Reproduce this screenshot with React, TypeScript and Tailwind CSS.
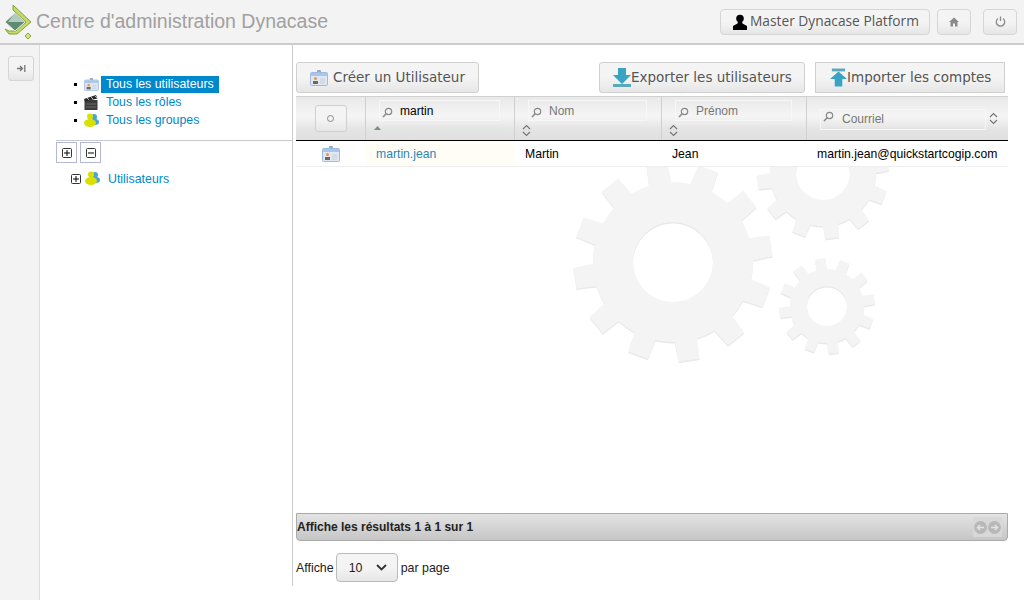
import type { ReactNode } from 'react'

// teeth are built from polar points, so the three gears share one function
function gearPath(cx: number, cy: number, body: number, outer: number, teeth: number, rot: number, hole: number) {
    const step = (Math.PI * 2) / teeth
    const p = (r: number, t: number) => `${(cx + r * Math.cos(t)).toFixed(1)} ${(cy + r * Math.sin(t)).toFixed(1)}`
    let d = ''
    for (let i = 0; i < teeth; i++) {
        const a = rot + i * step
        const w = step * 0.27
        const tw = step * 0.2
        d += `${i === 0 ? 'M' : `A${body} ${body} 0 0 1 `}${p(body, a - w)} L${p(outer, a - tw)} L${p(outer, a + tw)} L${p(body, a + w)} `
    }
    d += `A${body} ${body} 0 0 1 ${p(body, rot - step * 0.27)} Z`
    return `${d} M${cx - hole} ${cy} a${hole} ${hole} 0 1 0 ${hole * 2} 0 a${hole} ${hole} 0 1 0 ${-hole * 2} 0 Z`
}

const gears = [
    gearPath(377, 121, 80, 100, 12, 0.36, 40),
    gearPath(531, 165, 37, 48, 12, 0.38, 20),
    gearPath(527, 32, 53, 66, 12, 0.38, 27),
]

function GearBackground() {
    return (
        <svg className="absolute left-0 top-0" width="712" height="346" viewBox="0 0 712 346">
            {gears.map((d, i) => (
                <g key={i} fillRule="evenodd">
                    <path d={d} fill="#e9e9e9" transform="translate(0 1.5)" />
                    <path d={d} fill="#f4f4f4" />
                </g>
            ))}
        </svg>
    )
}

function Logo() {
    return (
        <svg width="30" height="42" viewBox="0 0 30 42">
            <path d="M9 4 L27 21 L13 33 L5 33 L1 28 L5 30 L12 30 L22 21 L9 9 Z" fill="#c3d96a" stroke="#86a336" strokeWidth="1" />
            <path d="M11 12 L21 21 L11 30 L1 21 Z" fill="#5f8a76" stroke="#e8efe0" strokeWidth="1" />
            <path d="M11 12 L21 21 L4 21 Z" fill="#b4cbbf" />
            <path d="M24 32 L27 35 L24 38 L21 35 Z" fill="#d6e585" stroke="#86a336" strokeWidth="1" />
        </svg>
    )
}

function CardIcon({ w = 18, h = 16 }: { w?: number; h?: number }) {
    return (
        <svg width={w} height={h} viewBox="0 0 18 16">
            <rect x="7" y="0" width="4" height="4" rx="1" fill="#9aa8bb" />
            <rect x="0.5" y="2.5" width="17" height="13" rx="1" fill="#dfe7f2" stroke="#9dbbe2" />
            <rect x="1" y="3" width="16" height="3" fill="#a9c5ea" />
            <rect x="3" y="7" width="5" height="5" fill="#f2e2cc" />
            <circle cx="5.5" cy="8.5" r="1.5" fill="#d29a6c" />
            <rect x="3" y="11" width="5" height="3" fill="#6a6a6a" />
            <path d="M10 9h5M10 11h5M10 13h5" stroke="#ccd0d6" />
        </svg>
    )
}

function ClapIcon() {
    return (
        <svg width="14" height="15" viewBox="0 0 14 15">
            <rect x="0.5" y="5" width="13" height="10" fill="#3c3c3c" />
            <path d="M0 4 L12 0 L13.5 3.5 L1 6.5 Z" fill="#2a2a2a" />
            <path d="M3 3 L5 5M7 2 L9 4M11 1 L13 3" stroke="#bbb" />
            <path d="M2 9h10M2 12h10" stroke="#6b6b6b" />
        </svg>
    )
}

function GroupIcon() {
    return (
        <svg width="15" height="14" viewBox="0 0 15 14">
            <circle cx="10" cy="4" r="3" fill="#4ba3dc" />
            <ellipse cx="11" cy="9" rx="4" ry="3" fill="#4ba3dc" />
            <circle cx="6" cy="3.5" r="3" fill="#d9e000" />
            <ellipse cx="6" cy="10" rx="6" ry="4" fill="#d9e000" />
        </svg>
    )
}

function ArrowIcon({ up }: { up?: boolean }) {
    return (
        <svg width={up ? 17 : 18} height="20" viewBox="0 0 18 20">
            {up ? (
                <>
                    <rect x="2" y="0" width="14" height="3" fill="#5aa8ba" />
                    <path d="M9 3 L18 11 L13 11 L13 19 L5 19 L5 11 L0 11 Z" fill="#38a3c2" />
                </>
            ) : (
                <>
                    <path d="M5 0 L13 0 L13 7 L18 7 L9 16 L0 7 L5 7 Z" fill="#38a3c2" />
                    <rect x="0" y="16" width="18" height="3" fill="#5aa8ba" />
                </>
            )}
        </svg>
    )
}

function SearchGlyph({ className }: { className: string }) {
    return (
        <svg width="11" height="11" viewBox="0 0 11 11" className={`shrink-0 ${className}`}>
            <circle cx="6.5" cy="4.5" r="3.2" fill="none" stroke="#888" strokeWidth="1.2" />
            <path d="M4.2 6.8 L1 10" stroke="#888" strokeWidth="1.6" />
        </svg>
    )
}

function SortGlyph() {
    return (
        <svg width="9" height="13" viewBox="0 0 9 13">
            <path d="M1 5 L4.5 1.5 L8 5M1 8 L4.5 11.5 L8 8" fill="none" stroke="#777" strokeWidth="1.2" />
        </svg>
    )
}

function TreeBox({ minus, className }: { minus?: boolean; className?: string }) {
    return (
        <svg width="10" height="10" viewBox="0 0 10 10" className={className}>
            <rect x="0.5" y="0.5" width="9" height="9" rx="1" fill="#fff" stroke="#333" />
            <path d={minus ? 'M2 5h6' : 'M2 5h6M5 2v6'} stroke="#000" />
        </svg>
    )
}

function FilterInput({ value, w, active, iconClass, textClass }: { value: string; w: string; active?: boolean; iconClass: string; textClass?: string }) {
    return (
        <div className={`flex h-[21px] items-center border border-[#f7f7f7] pl-[2px] text-[12px] ${w}`}>
            <SearchGlyph className={iconClass} />
            <span className={`${active ? 'ml-[7px] text-black' : 'ml-[7px] text-[#777]'} ${textClass ?? ''}`}>{value}</span>
        </div>
    )
}

const btnGradient = 'bg-[linear-gradient(#f4f4f4_0%,#f4f4f4_50%,#e6e6e6_100%)]'
const headGradient = 'bg-[linear-gradient(#e9e9e9_0%,#f5f5f5_45%,#e4e4e4_75%,#e0e0e0_100%)]'

function ToolButton({ children, className }: { children: ReactNode; className: string }) {
    return (
        <div className={`flex h-[31px] items-center border border-[#d0d0d0] font-['DejaVu_Sans',sans-serif] text-[13.5px] text-[#555] ${btnGradient} ${className}`}>
            {children}
        </div>
    )
}

function HeadCell({ children, className }: { children: ReactNode; className: string }) {
    return <div className={`shrink-0 border-r border-[#d0d0d0] ${className}`}>{children}</div>
}

function PagerDot({ d }: { d: string }) {
    return (
        <svg width="13" height="13" viewBox="0 0 13 13">
            <circle cx="6.5" cy="6.5" r="6.5" fill="#b8b8b8" />
            <path d={d} fill="none" stroke="#e4e4e4" strokeWidth="1.5" />
        </svg>
    )
}

export default function App() {
    return (
        <div className="flex h-[600px] w-[1024px] flex-col overflow-hidden bg-white font-['Liberation_Sans',sans-serif] text-[12px]">
            <header className="flex h-[45px] shrink-0 items-center border-b-2 border-[#cccccc] bg-[#f3f3f3] pl-[4px] pr-[7px]">
                <Logo />
                <span className="ml-[2px] text-[19.5px] text-[#a0a0a0]">Centre d'administration Dynacase</span>
                <div className={`ml-auto flex h-[26px] w-[210px] items-center rounded-[4px] border border-[#d6d6d6] pl-[12px] font-['Open_Sans',sans-serif] text-[13.75px] text-[#555] ${btnGradient}`}>
                    <svg width="14" height="16" viewBox="0 0 14 16">
                        <circle cx="7" cy="4.5" r="3.8" fill="#000" />
                        <path d="M5 7 L9 7 L9.5 9.5 L14 12 L14 16 L0 16 L0 12 L4.5 9.5 Z" fill="#000" />
                    </svg>
                    <span className="ml-[3px]">Master Dynacase Platform</span>
                </div>
                <div className={`ml-[7px] flex h-[26px] w-[34px] items-center justify-center rounded-[4px] border border-[#d6d6d6] ${btnGradient}`}>
                    <svg width="10" height="10" viewBox="0 0 10 10">
                        <path d="M5 0.5 L0 5 L1.5 5 L1.5 9.5 L4 9.5 L4 6.5 L6 6.5 L6 9.5 L8.5 9.5 L8.5 5 L10 5 Z" fill="#8a8a8a" />
                    </svg>
                </div>
                <div className={`ml-[12px] flex h-[26px] w-[34px] items-center justify-center rounded-[4px] border border-[#d6d6d6] ${btnGradient}`}>
                    <svg width="11" height="11" viewBox="0 0 11 11">
                        <path d="M3 2.5 A4.2 4.2 0 1 0 8 2.5 M5.5 0.5 V5" fill="none" stroke="#8a8a8a" strokeWidth="1.3" />
                    </svg>
                </div>
            </header>

            <div className="flex min-h-0 flex-1">
                <aside className="w-[40px] shrink-0 border-r border-[#dddddd] bg-[#f3f3f3] pl-[8px] pt-[11px]">
                    <div className={`flex h-[25px] w-[26px] items-center justify-center rounded-[3px] border border-[#d6d6d6] ${btnGradient}`}>
                        <svg width="9" height="7" viewBox="0 0 9 7">
                            <path d="M0 3.5 H5 M3 1 L5.5 3.5 L3 6 M7.8 0 V7" fill="none" stroke="#777" strokeWidth="1.3" />
                        </svg>
                    </div>
                </aside>

                <nav className="mb-[14px] w-[253px] shrink-0 border-r border-[#cccccc] pl-[16px] pt-[30px] text-[12.35px] text-[#0088cc]">
                    <ul className="ml-[18px] flex h-[65px] flex-col">
                        <li className="flex h-[18px] items-center">
                            <span className="h-[3px] w-[3px] bg-black" />
                            <span className="ml-[6px] flex w-[16px] justify-center"><CardIcon w={15} h={13} /></span>
                            <span className="ml-[2px] flex h-[17px] w-[118px] items-center bg-[#0088cc] pl-[5px] text-white">Tous les utilisateurs</span>
                        </li>
                        <li className="flex h-[18px] items-center">
                            <span className="h-[3px] w-[3px] bg-black" />
                            <span className="ml-[6px] flex w-[16px] justify-center"><ClapIcon /></span>
                            <span className="ml-[7px]">Tous les rôles</span>
                        </li>
                        <li className="flex h-[18px] items-center">
                            <span className="h-[3px] w-[3px] bg-black" />
                            <span className="ml-[6px] flex w-[16px] justify-center"><GroupIcon /></span>
                            <span className="ml-[7px]">Tous les groupes</span>
                        </li>
                    </ul>
                    <div className="border-b border-[#c8c8d4]" />
                    <div className="mt-[1px] flex gap-[3px]">
                        <div className="flex h-[21px] w-[21px] items-center justify-center border border-[#b4b8d2]">
                            <TreeBox />
                        </div>
                        <div className="flex h-[21px] w-[21px] items-center justify-center border border-[#b4b8d2]">
                            <TreeBox minus />
                        </div>
                    </div>
                    <div className="mt-[6px] flex h-[20px] items-center pl-[15px]">
                        <TreeBox />
                        <span className="-mt-[3px] ml-[4px]"><GroupIcon /></span>
                        <span className="ml-[8px]">Utilisateurs</span>
                    </div>
                </nav>

                <main className="flex w-[715px] shrink-0 flex-col pl-[3px] pt-[17px]">
                    <div className="flex">
                        <ToolButton className="w-[183px] rounded-[3px] pl-[13px]">
                            <CardIcon />
                            <span className="ml-[5px]">Créer un Utilisateur</span>
                        </ToolButton>
                        <ToolButton className="ml-[120px] w-[206px] rounded-[3px] pl-[13px]">
                            <ArrowIcon />
                            <span>Exporter les utilisateurs</span>
                        </ToolButton>
                        <ToolButton className="ml-[10px] w-[190px] pl-[14px]">
                            <ArrowIcon up />
                            <span>Importer les comptes</span>
                        </ToolButton>
                    </div>

                    <div className={`mt-[3px] flex h-[45px] w-[712px] border-b border-t border-b-black border-t-[#d0d0d0] ${headGradient}`}>
                        <HeadCell className="flex w-[70px] items-center justify-center">
                            <div className={`flex h-[27px] w-[32px] items-center justify-center rounded-[3px] border border-[#d0d0d0] ${btnGradient}`}>
                                <span className="h-[7px] w-[7px] rounded-full border border-[#888]" />
                            </div>
                        </HeadCell>
                        <HeadCell className="w-[149px] pl-[13px] pt-[3px]">
                            <FilterInput value="martin" w="w-[121px]" active iconClass="mt-[4px]" />
                            <svg width="9" height="6" viewBox="0 0 9 6" className="mt-[4px] ml-[-6px]">
                                <path d="M1 5 L4.5 1 L8 5 Z" fill="#888" />
                            </svg>
                        </HeadCell>
                        <HeadCell className="w-[147px] pl-[13px] pt-[3px]">
                            <FilterInput value="Nom" w="w-[119px]" iconClass="mt-[4px]" />
                            <div className="ml-[-6px] mt-[3px] h-[13px]"><SortGlyph /></div>
                        </HeadCell>
                        <HeadCell className="w-[145px] pl-[13px] pt-[3px]">
                            <FilterInput value="Prénom" w="w-[117px]" iconClass="mt-[4px]" />
                            <div className="ml-[-6px] mt-[3px] h-[13px]"><SortGlyph /></div>
                        </HeadCell>
                        <div className="flex flex-1 items-center pl-[13px]">
                            <FilterInput value="Courriel" w="w-[166px] mt-[1px]" iconClass="-mt-[6px]" textClass="ml-[8px]" />
                            <span className="ml-[3px] flex"><SortGlyph /></span>
                        </div>
                    </div>

                    <div className="relative min-h-0 w-[712px] flex-1 overflow-hidden">
                        <GearBackground />
                        <div className="relative flex h-[26px] items-center border-b border-[#eeeeee] bg-white text-[12.2px] text-black">
                            <div className="flex w-[70px] justify-center"><CardIcon /></div>
                            <div className="flex h-full w-[149px] items-center bg-[#fffdf5] pl-[10px] pt-[1px] text-[#2a85b8]">martin.jean</div>
                            <div className="w-[147px] pl-[10px] pt-[1px]">Martin</div>
                            <div className="w-[145px] pl-[10px] pt-[1px]">Jean</div>
                            <div className="flex-1 pl-[10px] pt-[1px]">martin.jean@quickstartcogip.com</div>
                        </div>
                    </div>

                    <div className="flex h-[28px] w-[712px] items-center rounded-b-[4px] border border-[#aaaaaa] bg-linear-to-b from-[#e3e3e3] to-[#c6c6c6] pr-[5px] text-[12px] font-bold text-[#222]">
                        <span>Affiche les résultats 1 à 1 sur 1</span>
                        <div className="ml-auto flex h-[20px] items-center gap-[1px] bg-[#d8d8d8] px-[1px]">
                            <PagerDot d="M10 6.5H3.5M6 4L3.5 6.5L6 9" />
                            <PagerDot d="M3 6.5H9.5M7 4L9.5 6.5L7 9" />
                        </div>
                    </div>

                    <div className="mb-[18px] mt-[12px] flex h-[29px] items-center text-[12.4px] text-[#222]">
                        <span className="pt-[1px]">Affiche</span>
                        <div className={`ml-[2px] flex h-[29px] w-[62px] items-center rounded-[4px] border border-[#bbbbbb] pl-[12px] ${btnGradient}`}>
                            <span className="pt-[1px]">10</span>
                            <svg width="11" height="7" viewBox="0 0 11 7" className="ml-[14px]">
                                <path d="M1 1 L5.5 5.5 L10 1" fill="none" stroke="#333" strokeWidth="1.8" />
                            </svg>
                        </div>
                        <span className="ml-[3px] pt-[1px]">par page</span>
                    </div>
                </main>
            </div>
        </div>
    )
}
